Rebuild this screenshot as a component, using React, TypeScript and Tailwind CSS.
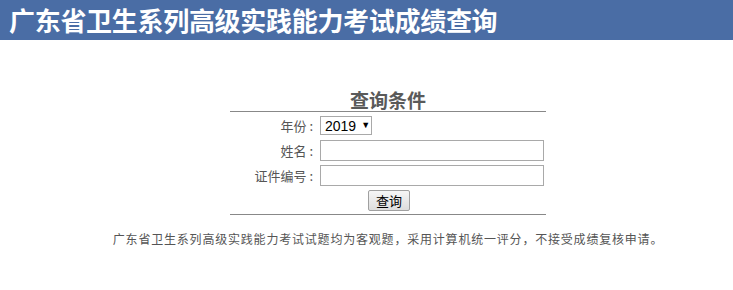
import React from "react";

export default function App() {
  const cjk = { fontFamily: '"Noto Sans CJK SC", "Microsoft YaHei", sans-serif' };
  return (
    <div className="w-[733px] h-[290px] bg-white" style={cjk}>
      <div className="h-[40px] bg-[#4a6da5] flex items-center pl-[9px]">
        <h1 className="text-white font-bold text-[26px] leading-none tracking-[-0.3px]">
          广东省卫生系列高级实践能力考试成绩查询
        </h1>
      </div>
      <div className="flex flex-col items-center pl-[43px] pt-[49px]">
        <div className="w-[316px] flex flex-col">
          <div className="text-center text-[19px] font-bold text-[#5a5a5a] leading-[22px]">查询条件</div>
          <div className="h-px bg-[#888]" />
          <div className="grid grid-cols-[86px_1fr] gap-x-[4px] pt-[4px] text-[13px] text-[#555] leading-none">
            <div className="flex items-center justify-end h-[19px]">年份&nbsp;:&nbsp;</div>
            <div className="h-[19px]">
              <div className="w-[52px] h-[19px] border border-[#a9a9a9] flex items-center pl-[4px] text-[14px] text-black" style={{ fontFamily: '"Liberation Sans", Arial, sans-serif' }}>
                2019<span className="text-[9px] ml-[5px]">▼</span>
              </div>
            </div>
            <div className="flex items-center justify-end h-[21px] mt-[5px]">姓名&nbsp;:&nbsp;</div>
            <div className="mt-[5px]">
              <div className="w-[224px] h-[21px] border border-[#a9a9a9] bg-white" />
            </div>
            <div className="flex items-center justify-end h-[21px] mt-[4px]">证件编号&nbsp;:&nbsp;</div>
            <div className="mt-[4px]">
              <div className="w-[224px] h-[21px] border border-[#a9a9a9] bg-white" />
            </div>
          </div>
          <div className="flex justify-center pt-[4px] pb-[3px]">
            <button className="w-[42px] h-[21px] border border-[#a0a0a0] rounded-[2px] bg-gradient-to-b from-[#f6f6f6] to-[#dddddd] text-[13px] text-black leading-none ml-[2px]">
              查询
            </button>
          </div>
          <div className="h-px bg-[#888]" />
        </div>
        <p className="mt-[18px] text-[12px] text-[#555] leading-none tracking-[0.8px]">
          广东省卫生系列高级实践能力考试试题均为客观题，采用计算机统一评分，不接受成绩复核申请。
        </p>
      </div>
    </div>
  );
}
